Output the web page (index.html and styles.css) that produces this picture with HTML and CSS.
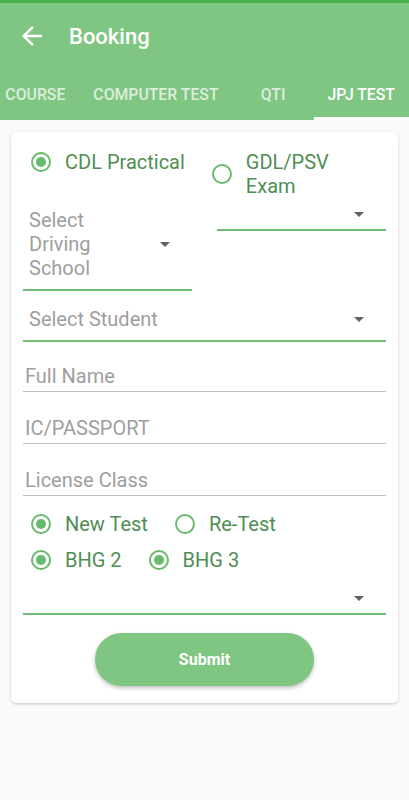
FILE: index.html
```html
<!DOCTYPE html>
<html lang="en">
<head>
    <meta charset="UTF-8">
    <meta name="viewport" content="width=device-width, initial-scale=1.0">
    <title>Booking</title>
    <link rel="stylesheet" href="styles.css">
</head>
<body>
    <!-- App bar with tabs -->
    <header class="appbar">
        <div class="toolbar">
            <svg class="back" viewBox="0 0 24 24" width="30" height="30">
                <path d="M20 11H7.83l5.59-5.59L12 4l-8 8 8 8 1.41-1.41L7.83 13H20v-2z" fill="#fff"/>
            </svg>
            <h1 class="title">Booking</h1>
        </div>
        <nav class="tabs">
            <div class="tab">COURSE</div>
            <div class="tab">COMPUTER TEST</div>
            <div class="tab">QTI</div>
            <div class="tab active">JPJ TEST</div>
        </nav>
    </header>

    <main class="card">
        <div class="radio-row first">
            <div class="radio checked"><span class="dot"></span><span class="label">CDL Practical</span></div>
            <div class="radio"><span class="dot"></span><span class="label narrow">GDL/PSV Exam</span></div>
        </div>

        <div class="spinner-row">
            <div class="spinner">
                <span class="hint narrow-hint">Select Driving School</span>
                <span class="arrow"></span>
            </div>
            <div class="spinner empty">
                <span class="hint"></span>
                <span class="arrow"></span>
            </div>
        </div>

        <div class="spinner student">
            <span class="hint">Select Student</span>
            <span class="arrow"></span>
        </div>

        <div class="field first">Full Name</div>
        <div class="field">IC/PASSPORT</div>
        <div class="field">License Class</div>

        <div class="radio-row test">
            <div class="radio checked"><span class="dot"></span><span class="label">New Test</span></div>
            <div class="radio"><span class="dot"></span><span class="label">Re-Test</span></div>
        </div>
        <div class="radio-row bhg">
            <div class="radio checked"><span class="dot"></span><span class="label">BHG 2</span></div>
            <div class="radio checked"><span class="dot"></span><span class="label">BHG 3</span></div>
        </div>

        <div class="spinner empty last">
            <span class="hint"></span>
            <span class="arrow"></span>
        </div>

        <div class="actions">
            <button class="submit">Submit</button>
        </div>
    </main>
</body>
</html>
```

FILE: styles.css
```css
body, html {
    margin: 0;
    padding: 0;
    width: 100%;
    height: 100%;
    background: #fafafa;
    font-family: Roboto, "Liberation Sans", sans-serif;
}

.appbar {
    background: #80c683;
    border-top: 3px solid #4caf50;
    color: white;
}

.toolbar {
    height: 66px;
    display: flex;
    align-items: center;
    padding-left: 17px;
}

.back {
    display: block;
}

.title {
    margin: 0 0 0 22px;
    font-size: 22px;
    font-weight: 500;
}

.tabs {
    height: 51px;
    display: flex;
    justify-content: flex-end;
    overflow: hidden;
}

.tab {
    flex: none;
    min-width: 81px;
    box-sizing: border-box;
    padding: 3px 14px 0;
    display: flex;
    align-items: center;
    justify-content: center;
    font-size: 15.8px;
    font-weight: 500;
    color: rgba(255, 255, 255, 0.72);
    border-bottom: 3px solid transparent;
}

.tab.active {
    color: white;
    border-bottom-color: white;
}

.card {
    display: block;
    margin: 12px 11px;
    padding: 18px 12px 17px;
    background: white;
    border-radius: 5px;
    box-shadow: 0 1px 3px rgba(0, 0, 0, 0.2);
}

/* radio buttons */
.radio-row {
    display: flex;
    align-items: flex-start;
    gap: 19px;
}

.radio-row.test {
    margin-top: 16px;
}

.radio-row.bhg {
    margin-top: 12px;
}

.radio {
    display: flex;
    align-items: center;
    font-size: 20px;
    line-height: 24px;
    color: #4f8e52;
}

.dot {
    width: 16px;
    height: 16px;
    margin: 0 14px 0 8px;
    border: 2px solid #66bb6a;
    border-radius: 50%;
    position: relative;
    flex: none;
}

.radio.checked .dot::after {
    content: "";
    position: absolute;
    top: 3px;
    left: 3px;
    width: 10px;
    height: 10px;
    border-radius: 50%;
    background: #66bb6a;
}

.label.narrow {
    width: 100px;
}

/* spinners */
.spinner-row {
    display: grid;
    grid-template-columns: 1fr 1fr;
    gap: 25px;
    align-items: start;
}

.spinner {
    display: flex;
    align-items: center;
    justify-content: space-between;
    padding: 10px 22px 9px 6px;
    border-bottom: 2px solid #6cbd70;
    font-size: 20px;
    line-height: 24px;
    color: #9e9e9e;
}

.spinner.empty {
    min-height: 12px;
    line-height: 12px;
}

.spinner.student {
    margin-top: 6px;
}

.spinner.last {
    margin-top: 10px;
}

.narrow-hint {
    width: 110px;
}

.arrow {
    width: 0;
    height: 0;
    border-left: 5px solid transparent;
    border-right: 5px solid transparent;
    border-top: 5px solid #616161;
    flex: none;
}

/* text fields */
.field {
    padding: 24px 0 3px 2px;
    border-bottom: 1px solid #bdbdbd;
    font-size: 20px;
    line-height: 24px;
    color: #9e9e9e;
}

.field.first {
    padding-top: 22px;
}

.actions {
    display: flex;
    justify-content: center;
    margin-top: 18px;
}

.submit {
    width: 219px;
    height: 53px;
    border: none;
    border-radius: 27px;
    background: #80c683;
    color: white;
    font-family: Roboto, "Liberation Sans", sans-serif;
    font-size: 16px;
    font-weight: 700;
    box-shadow: 0 2px 4px rgba(0, 0, 0, 0.25);
}
```
